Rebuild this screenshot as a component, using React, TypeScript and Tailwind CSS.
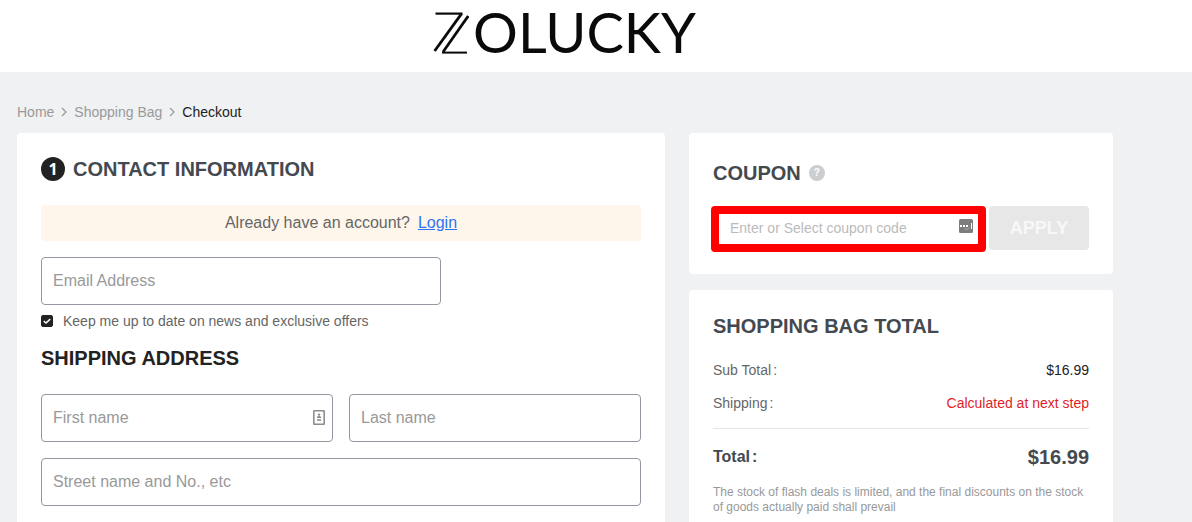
import React from "react";

const inputClass =
  "block h-12 w-full rounded border border-[#9696a0] bg-white px-[11px] text-base text-[#222222] placeholder:text-[#999999] outline-none";

function Logo() {
  return (
    <a href="#home" aria-label="Zolucky" className="flex items-center text-[#0a0a0a]">
      <svg width="36" height="44" viewBox="0 0 36 44" aria-hidden="true" fill="none">
        <path d="M2.5 3.6H29.5" stroke="currentColor" strokeWidth="2.2" />
        <path d="M28.6 3.6L1.6 41" stroke="currentColor" strokeWidth="2.8" />
        <path d="M35.2 6L10 42" stroke="currentColor" strokeWidth="2.8" />
        <path d="M9 42.6H34" stroke="currentColor" strokeWidth="2" />
      </svg>
      <span className="ml-1 block font-['Lato',sans-serif] text-[56px] leading-[60px]">OLUCKY</span>
    </a>
  );
}

function Chevron() {
  return (
    <svg width="6" height="10" viewBox="0 0 6 10" fill="none" aria-hidden="true">
      <path d="M1 1l4 4-4 4" stroke="#999999" strokeWidth="1.2" />
    </svg>
  );
}

function Row({ label, value, valueClass }: { label: string; value: string; valueClass: string }) {
  return (
    <div className="flex items-center justify-between text-sm leading-5">
      <dt className="text-[#666666]">
        {label}
        <span className="ml-0.5">:</span>
      </dt>
      <dd className={valueClass}>{value}</dd>
    </div>
  );
}

export default function App() {
  return (
    <div className="min-h-screen bg-[#f0f1f3] font-['Liberation_Sans',Arial,sans-serif] text-[#222222]">
      <header className="flex h-[72px] items-center justify-center bg-white pr-[79px] pb-2 pl-4">
        <Logo />
      </header>

      <main className="pt-[30px] pr-[79px] pb-6 pl-[17px]">
        <nav aria-label="Breadcrumb" className="flex items-center gap-[7px] text-sm leading-5 text-[#999999]">
          <a href="#home">Home</a>
          <Chevron />
          <a href="#bag">Shopping Bag</a>
          <Chevron />
          <span aria-current="page" className="text-[#222222]">Checkout</span>
        </nav>

        <div className="mt-[11px] grid grid-cols-[648fr_424fr] gap-6">
          <form className="rounded bg-white p-6">
            <h2 className="flex items-center gap-2 text-xl leading-6 font-bold text-[#444950]">
              <span className="flex size-6 items-center justify-center rounded-full bg-[#222222] font-['Noto_Sans',sans-serif] text-base text-white">
                1
              </span>
              CONTACT INFORMATION
            </h2>

            <p className="mt-6 rounded-sm bg-[#fff6eb] text-center text-base leading-9 text-[#666666]">
              Already have an account?
              <a href="#login" className="ml-2 text-[#2d73f5] underline">Login</a>
            </p>

            <div className="mt-4 w-2/3">
              <input type="email" aria-label="Email Address" placeholder="Email Address" className={inputClass} />
            </div>

            <label className="mt-1.5 flex items-center text-sm leading-5 text-[#666666]">
              <span className="relative flex size-3">
                <input
                  type="checkbox"
                  defaultChecked
                  className="peer size-3 appearance-none rounded-[2px] border border-[#222222] checked:bg-[#222222]"
                />
                <svg
                  viewBox="0 0 12 12"
                  fill="none"
                  aria-hidden="true"
                  className="pointer-events-none absolute inset-0 hidden size-3 peer-checked:block"
                >
                  <path d="M2.8 6.1L5 8.1l4.2-4" stroke="white" strokeWidth="1.5" />
                </svg>
              </span>
              <span className="ml-2.5">Keep me up to date on news and exclusive offers</span>
            </label>

            <h2 className="mt-[15px] text-xl leading-6 font-bold">SHIPPING ADDRESS</h2>

            <div className="mt-6 grid grid-cols-2 gap-4">
              <div className="relative">
                <input type="text" aria-label="First name" placeholder="First name" className={inputClass} />
                <svg
                  width="12"
                  height="15"
                  viewBox="0 0 12 15"
                  fill="none"
                  aria-hidden="true"
                  className="absolute top-4 right-2"
                >
                  <rect x="0.8" y="0.8" width="10.4" height="13.4" rx="0.5" stroke="#8c8c8c" strokeWidth="1.6" />
                  <circle cx="6" cy="4.6" r="1.2" fill="#8c8c8c" />
                  <path d="M4 8V7.2Q4 6 6 6t2 1.2V8z" fill="#8c8c8c" />
                  <path d="M4 10h4" stroke="#8c8c8c" strokeWidth="1.6" />
                </svg>
              </div>
              <input type="text" aria-label="Last name" placeholder="Last name" className={inputClass} />
              <div className="col-span-2">
                <input
                  type="text"
                  aria-label="Street name and No., etc"
                  placeholder="Street name and No., etc"
                  className={inputClass}
                />
              </div>
            </div>
          </form>

          <aside className="flex flex-col gap-4">
            <section className="rounded bg-white px-6 pt-7 pb-6">
              <h2 className="flex items-center gap-2 text-xl leading-6 font-bold text-[#444950]">
                COUPON
                <button
                  type="button"
                  aria-label="Coupon help"
                  className="flex size-4 items-center justify-center rounded-full bg-[#cccdd1] text-[10px] leading-4 font-bold text-white"
                >
                  ?
                </button>
              </h2>
              <div className="mt-[21px] flex gap-1">
                <div className="relative h-11 flex-1">
                  <input
                    type="text"
                    aria-label="Coupon code"
                    placeholder="Enter or Select coupon code"
                    className="h-full w-full rounded bg-white pr-8 pl-[17px] text-sm placeholder:text-[#bbbbbb] outline-none"
                  />
                  <svg
                    width="14"
                    height="14"
                    viewBox="0 0 14 14"
                    aria-hidden="true"
                    className="absolute top-[13px] right-3"
                  >
                    <rect width="14" height="14" rx="1.5" fill="#7d7d7d" />
                    <path d="M1 6h2v2H1zM4 6h2v2H4zM7 6h2v2H7z" fill="white" />
                    <path d="M12.5 4v6" stroke="white" strokeWidth="1" />
                    <path d="M5.5 9l2.5 1.8L10.5 8.5" stroke="#aaaaaa" strokeWidth="1" fill="none" />
                  </svg>
                  <div className="pointer-events-none absolute top-0 -right-px -bottom-0.5 -left-0.5 rounded border-8 border-[#ff0000]" />
                </div>
                <button type="button" className="h-11 w-[100px] rounded bg-[#e7e7e7] text-lg font-bold text-[#f8f8f8]">
                  APPLY
                </button>
              </div>
            </section>

            <section className="flex-1 rounded bg-white p-6">
              <h2 className="text-xl leading-6 font-bold text-[#444950]">SHOPPING BAG TOTAL</h2>
              <dl>
                <div className="mt-[22px] flex flex-col gap-[13px]">
                  <Row label="Sub Total" value="$16.99" valueClass="text-[#222222]" />
                  <Row label="Shipping" value="Calculated at next step" valueClass="text-[#dd1f2a]" />
                </div>
                <div className="mt-[15px] flex items-center justify-between border-t border-[#e6e6e6] pt-4 font-bold text-[#444950]">
                  <dt className="text-base leading-6">
                    Total<span className="ml-0.5">:</span>
                  </dt>
                  <dd className="text-xl leading-6">$16.99</dd>
                </div>
              </dl>
              <p className="mt-4 text-xs leading-[15px] text-[#999999]">
                The stock of flash deals is limited, and the final discounts on the stock of goods actually paid shall
                prevail
              </p>
            </section>
          </aside>
        </div>
      </main>
    </div>
  );
}
